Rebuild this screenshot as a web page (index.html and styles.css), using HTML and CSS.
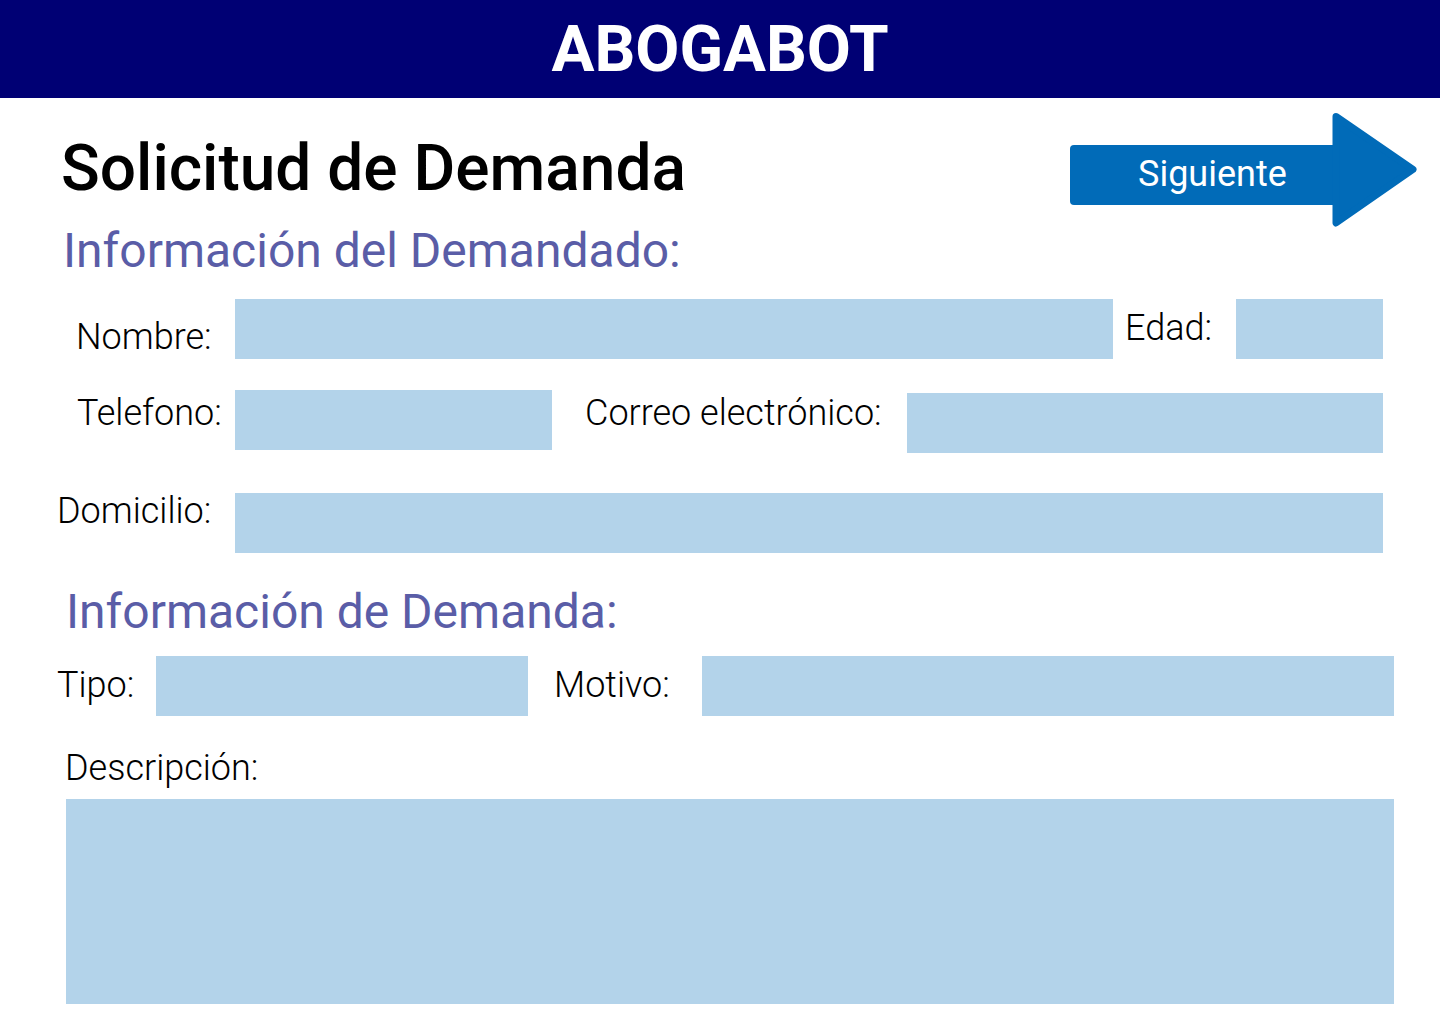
FILE: index.html
```html
<!DOCTYPE html>
<html lang="es">
<head>
<meta charset="utf-8">
<title>ABOGABOT - Solicitud de Demanda</title>
<link rel="stylesheet" href="styles.css">
</head>
<body>
<header class="topbar">
  <h1 class="brand">ABOGABOT</h1>
</header>
<main class="page">
  <div class="title-row">
    <h2 class="title">Solicitud de Demanda</h2>
    <a class="next" href="#">
      <svg class="next-shape" width="347" height="114" viewBox="0 0 347 114" aria-hidden="true">
        <rect x="0" y="32" width="272" height="60" rx="4" fill="#016bb8"/>
        <polygon points="266,3.5 343,56.5 266,110" fill="#016bb8" stroke="#016bb8" stroke-width="7" stroke-linejoin="round"/>
      </svg>
      <span class="next-label">Siguiente</span>
    </a>
  </div>

  <h3 class="section section-1">Información del Demandado:</h3>

  <div class="row row-nombre">
    <label class="lbl lbl-nombre">Nombre:</label>
    <div class="field f-nombre"></div>
    <label class="lbl lbl-edad">Edad:</label>
    <div class="field f-edad"></div>
  </div>

  <div class="row row-tel">
    <label class="lbl lbl-tel">Telefono:</label>
    <div class="field f-tel"></div>
    <label class="lbl lbl-correo">Correo electrónico:</label>
    <div class="field f-correo"></div>
  </div>

  <div class="row row-dom">
    <label class="lbl lbl-dom">Domicilio:</label>
    <div class="field f-dom"></div>
  </div>

  <h3 class="section section-2">Información de Demanda:</h3>

  <div class="row row-tipo">
    <label class="lbl lbl-tipo">Tipo:</label>
    <div class="field f-tipo"></div>
    <label class="lbl lbl-motivo">Motivo:</label>
    <div class="field f-motivo"></div>
  </div>

  <label class="lbl lbl-desc">Descripción:</label>
  <div class="field f-desc"></div>
</main>
</body>
</html>
```

FILE: styles.css
```css
* { box-sizing: border-box; }

html, body {
  margin: 0;
  padding: 0;
  background: #ffffff;
}

body {
  width: 1440px;
  height: 1024px;
  overflow: hidden;
  font-family: Roboto, "Liberation Sans", Arial, sans-serif;
  color: #000;
}

.topbar {
  height: 98px;
  background: #000074;
  display: flex;
  justify-content: center;
}

.brand {
  margin: 0;
  padding-top: 1px;
  font-size: 64px;
  line-height: 98px;
  font-weight: 700;
  color: #ffffff;
  letter-spacing: 0;
}

.page {
  display: flex;
  flex-direction: column;
  align-items: flex-start;
}

.title-row {
  width: 100%;
  margin-top: 15px;
  height: 114px;
  display: flex;
  justify-content: space-between;
  align-items: flex-start;
  padding-left: 61px;
  padding-right: 23px;
}

.title {
  margin: 24px 0 0 0;
  font-size: 64px;
  line-height: 1;
  font-weight: 500;
}

.next {
  position: relative;
  display: block;
  width: 347px;
  height: 114px;
  text-decoration: none;
}

.next-shape {
  display: block;
}

.next-label {
  position: absolute;
  left: 68px;
  top: 43px;
  font-size: 36px;
  line-height: 1;
  font-weight: 400;
  color: #ffffff;
}

.section {
  margin: 0;
  font-size: 48px;
  line-height: 1;
  font-weight: 400;
  color: #5a5da7;
}

.section-1 { padding-left: 63px; }
.section-2 { padding-left: 66px; margin-top: 35px; }

.row {
  display: flex;
  align-items: flex-start;
}

.lbl {
  display: block;
  font-size: 36px;
  line-height: 1;
  font-weight: 300;
  color: #000;
  white-space: nowrap;
}

.field {
  background: #b3d3ea;
  height: 60px;
}

/* Row: Nombre / Edad */
.row-nombre { margin-top: 24px; padding-left: 76px; }
.lbl-nombre { width: 159px; margin-top: 20px; }
.f-nombre { width: 878px; }
.lbl-edad { width: 111px; margin-left: 12px; margin-top: 11px; }
.f-edad { width: 147px; }

/* Row: Telefono / Correo */
.row-tel { margin-top: 31px; padding-left: 77px; }
.lbl-tel { width: 158px; margin-top: 5px; }
.f-tel { width: 317px; }
.lbl-correo { width: 322px; margin-left: 33px; margin-top: 5px; }
.f-correo { width: 476px; margin-top: 3px; }

/* Row: Domicilio */
.row-dom { margin-top: 40px; padding-left: 57px; }
.lbl-dom { width: 178px; margin-top: 0; }
.f-dom { width: 1148px; }

/* Row: Tipo / Motivo */
.row-tipo { margin-top: 20px; padding-left: 57px; }
.lbl-tipo { width: 99px; margin-top: 11px; }
.f-tipo { width: 372px; }
.lbl-motivo { width: 148px; margin-left: 26px; margin-top: 11px; }
.f-motivo { width: 692px; }

/* Descripción */
.lbl-desc { margin-top: 34px; margin-left: 65px; }
.f-desc {
  margin-top: 13px;
  margin-left: 66px;
  width: 1328px;
  height: 205px;
}
```
